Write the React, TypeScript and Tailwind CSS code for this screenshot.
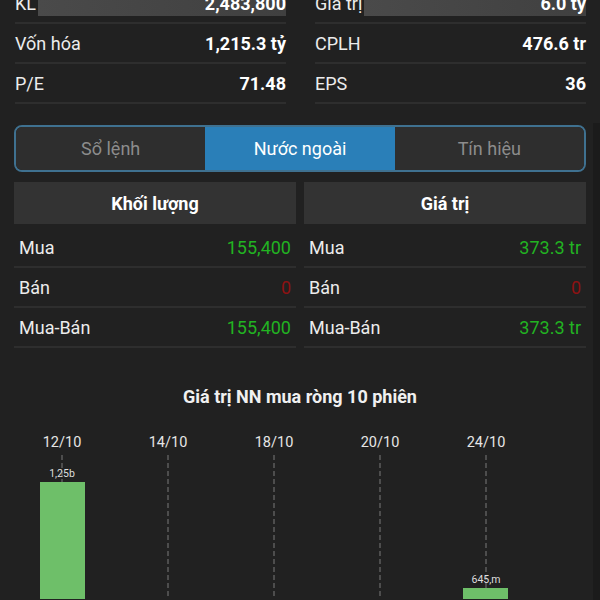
import React from "react";

const font = { fontFamily: "Roboto, 'Noto Sans', sans-serif" };

function TopRow({ label, value, bar }: { label: string; value: string; bar?: boolean }) {
  return (
    <div className="h-[40px] flex items-center justify-between border-b-2 border-[#2e2e2e]">
      <span className="text-[18px] text-[#ececec] whitespace-nowrap">{label}</span>
      {bar ? (
        <div className="flex-1 h-[26px] ml-[2px] bg-gradient-to-r from-[#4a4a4a] to-[#404040] flex items-center justify-end">
          <span className="text-[18px] font-bold text-white">{value}</span>
        </div>
      ) : (
        <span className="text-[18px] font-bold text-white">{value}</span>
      )}
    </div>
  );
}

function DataRow({ label, value, color }: { label: string; value: string; color: string }) {
  return (
    <div className="h-[40px] flex items-center justify-between border-b-2 border-[#2e2e2e] pl-[5px] pr-[5px]">
      <span className="text-[18px] text-[#ececec]">{label}</span>
      <span className={`text-[18px] ${color}`}>{value}</span>
    </div>
  );
}

export default function App() {
  const dates = [
    { x: 62, t: "12/10" },
    { x: 168, t: "14/10" },
    { x: 274, t: "18/10" },
    { x: 380, t: "20/10" },
    { x: 486, t: "24/10" },
  ];
  return (
    <div className="relative w-[600px] h-[600px] overflow-hidden bg-[#212121]" style={font}>
      {/* top stats */}
      <div className="mt-[-16px] pl-[15px] pr-[14px] grid grid-cols-2 gap-x-[29px]">
        <div className="flex flex-col">
          <TopRow label="KL" value="2,483,800" bar />
          <TopRow label="Vốn hóa" value="1,215.3 tỷ" />
          <TopRow label="P/E" value="71.48" />
        </div>
        <div className="flex flex-col">
          <TopRow label="Giá trị" value="6.0 tỷ" bar />
          <TopRow label="CPLH" value="476.6 tr" />
          <TopRow label="EPS" value="36" />
        </div>
      </div>

      {/* tabs */}
      <div className="mt-[21px] px-[14px]">
        <div className="h-[47px] rounded-[8px] border-2 border-[#3f7190] overflow-hidden grid grid-cols-3">
          <div className="bg-[#2e2e2e] flex items-center justify-center text-[18px] text-[#8c8c8c]">Sổ lệnh</div>
          <div className="bg-[#2a7fb8] flex items-center justify-center text-[18px] text-white">Nước ngoài</div>
          <div className="bg-[#2e2e2e] flex items-center justify-center text-[18px] text-[#8c8c8c]">Tín hiệu</div>
        </div>
      </div>

      {/* headers + data */}
      <div className="mt-[10px] px-[14px] grid grid-cols-2 gap-x-[8px]">
        <div className="flex flex-col">
          <div className="h-[42px] bg-[#333333] flex items-center justify-center text-[18px] font-bold text-white">Khối lượng</div>
          <div className="mt-[4px] flex flex-col">
            <DataRow label="Mua" value="155,400" color="text-[#22b322]" />
            <DataRow label="Bán" value="0" color="text-[#8e1212]" />
            <DataRow label="Mua-Bán" value="155,400" color="text-[#22b322]" />
          </div>
        </div>
        <div className="flex flex-col">
          <div className="h-[42px] bg-[#333333] flex items-center justify-center text-[18px] font-bold text-white">Giá trị</div>
          <div className="mt-[4px] flex flex-col">
            <DataRow label="Mua" value="373.3 tr" color="text-[#22b322]" />
            <DataRow label="Bán" value="0" color="text-[#8e1212]" />
            <DataRow label="Mua-Bán" value="373.3 tr" color="text-[#22b322]" />
          </div>
        </div>
      </div>

      {/* chart title */}
      <div className="mt-[35px] h-[26px] flex items-center justify-center text-[18px] font-bold text-[#f0f0f0]">
        Giá trị NN mua ròng 10 phiên
      </div>

      {/* chart */}
      <svg width="600" height="190" className="block" style={font}>
        {dates.map((d) => (
          <g key={d.t}>
            <text x={d.x} y={38} textAnchor="middle" fontSize="14.5" fill="#e6e6e6">
              {d.t}
            </text>
            <line x1={d.x} y1={46} x2={d.x} y2={190} stroke="#7a7a7a" strokeWidth="1" strokeDasharray="5 3" />
          </g>
        ))}
        <text x={62} y={68} textAnchor="middle" fontSize="10.5" fill="#dedede">1,25b</text>
        <rect x={40} y={73} width={45} height={117} fill="#6ebf69" />
        <text x={486} y={174} textAnchor="middle" fontSize="10.5" fill="#dedede">645,m</text>
        <rect x={463} y={179} width={45} height={11} fill="#6ebf69" />
      </svg>

      {/* scroll strip */}
      <div className="absolute right-0 top-[123px] bottom-0 w-[7px] bg-[#1b1b1b]" />
    </div>
  );
}
